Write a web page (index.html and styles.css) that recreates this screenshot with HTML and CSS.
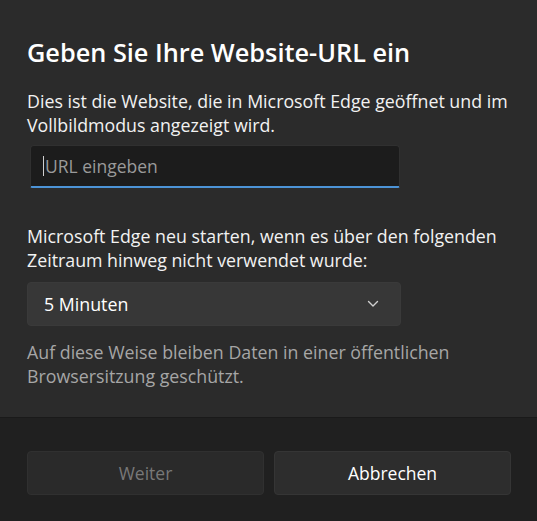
FILE: index.html
```html
<!DOCTYPE html>
<html lang="de">

<head>
    <meta name="viewport" content="width=device-width, initial-scale=1.0">
    <link rel="stylesheet" href="styles.css">
    <title>Website-URL</title>
</head>

<body>
    <div class="dialog">
        <div class="content">
            <h1 class="title">Geben Sie Ihre Website-URL ein</h1>
            <p class="text">Dies ist die Website, die in Microsoft Edge geöffnet und im Vollbildmodus angezeigt wird.</p>

            <div class="url-box">
                <span class="caret"></span>
                <span class="placeholder">URL eingeben</span>
            </div>

            <p class="text gap-top">Microsoft Edge neu starten, wenn es über den folgenden Zeitraum hinweg nicht verwendet wurde:</p>

            <div class="select">
                <span>5 Minuten</span>
                <svg class="chevron" width="12" height="8" viewBox="0 0 12 8">
                    <path d="M1.5 1.5 L6 6 L10.5 1.5" fill="none" stroke="#d0d0d0" stroke-width="1.4" stroke-linecap="round" stroke-linejoin="round"/>
                </svg>
            </div>

            <p class="note">Auf diese Weise bleiben Daten in einer öffentlichen Browsersitzung geschützt.</p>
        </div>

        <div class="footer">
            <button class="btn disabled">Weiter</button>
            <button class="btn">Abbrechen</button>
        </div>
    </div>
</body>

</html>
```

FILE: styles.css
```css
body {
    font-family: "Open Sans", "Noto Sans", sans-serif;
    margin: 0;
    padding: 0;
    background-color: #202020;
    color: #ffffff;
}

.dialog {
    width: 537px;
    height: 521px;
    display: flex;
    flex-direction: column;
}

.content {
    background-color: #2b2b2b;
    padding: 36px 22px 29px 27px;
    border-bottom: 1px solid #1a1a1a;
}

.title {
    font-size: 25.3px;
    font-weight: 600;
    line-height: 32px;
    margin: 0;
}

.text {
    font-size: 17.8px;
    line-height: 24px;
    margin: 21px 0 0 0;
    color: #f2f2f2;
}

.gap-top {
    margin-top: 36px;
}

.url-box {
    margin: 8px 0 0 3px;
    width: 370px;
    height: 43px;
    box-sizing: border-box;
    background-color: #1c1c1c;
    border: 1px solid #303030;
    border-bottom: 2px solid #4c93d6;
    border-radius: 4px 4px 2px 2px;
    display: flex;
    align-items: center;
    padding-left: 12px;
}

.caret {
    width: 1px;
    height: 20px;
    background-color: #cfcfcf;
    margin-right: 1px;
}

.placeholder {
    font-size: 17.5px;
    line-height: 24px;
    color: #9a9a9a;
}

.select {
    margin-top: 10px;
    width: 374px;
    height: 44px;
    box-sizing: border-box;
    background-color: #373737;
    border: 1px solid #3a3a3a;
    border-radius: 4px;
    display: flex;
    align-items: center;
    justify-content: space-between;
    padding: 0 21px 0 16px;
    font-size: 17.8px;
    line-height: 24px;
}

.note {
    font-size: 17.8px;
    line-height: 24px;
    margin: 14px 0 0 0;
    color: #a6a6a6;
}

.footer {
    flex: 1;
    background-color: #202020;
    display: flex;
    gap: 10px;
    padding: 33px 26px 0 27px;
}

.btn {
    flex: 1;
    height: 44px;
    background-color: #2d2d2d;
    border: 1px solid #353535;
    border-radius: 4px;
    color: #ffffff;
    font-family: "Open Sans", "Noto Sans", sans-serif;
    font-size: 17.5px;
}

.btn.disabled {
    color: #787878;
    background-color: #2a2a2a;
    border-color: #303030;
}
```
